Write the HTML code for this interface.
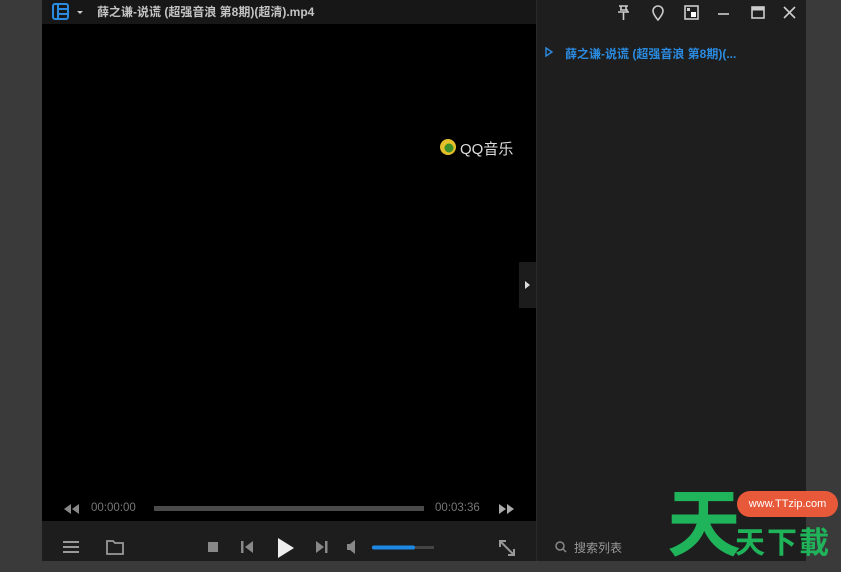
<!DOCTYPE html>
<html><head><meta charset="utf-8"><style>
*{margin:0;padding:0;box-sizing:border-box}
body{width:841px;height:561px;background:#3a3a3a;position:relative;overflow:hidden;font-family:"Liberation Sans","Noto Sans CJK SC",sans-serif}
.abs{position:absolute}
</style></head><body>
<div class="abs" style="left:42px;top:0;width:764px;height:561px;background:#1b1b1b"></div>
<div class="abs" style="left:42px;top:0;width:494px;height:24px;background:#171717"></div>
<svg class="abs" style="left:52px;top:3px" width="40" height="18">
<rect x="1" y="1" width="15" height="15" rx="2" fill="none" stroke="#2b8be0" stroke-width="2"/>
<line x1="6" y1="1" x2="6" y2="16" stroke="#2b8be0" stroke-width="2"/>
<line x1="6" y1="6" x2="16" y2="6" stroke="#2b8be0" stroke-width="2"/>
<line x1="6" y1="11" x2="16" y2="11" stroke="#2b8be0" stroke-width="2"/>
<path d="M25 8 L31 8 L28 11 Z" fill="#ccc"/>
</svg>
<div class="abs" style="left:97px;top:3px;font-size:12px;color:#c4c4c4;white-space:nowrap;font-weight:bold">薛之谦-说谎 (超强音浪 第8期)(超清).mp4</div>
<div class="abs" style="left:42px;top:24px;width:494px;height:497px;background:#000"></div>
<svg class="abs" style="left:439px;top:138px" width="20" height="20"><circle cx="9" cy="9" r="8" fill="#e5c02a"/><circle cx="10" cy="10" r="4.5" fill="#3e8f2a"/></svg>
<div class="abs" style="left:460px;top:138px;font-size:15px;color:#ddd">QQ音乐</div>
<div class="abs" style="left:519px;top:262px;width:17px;height:46px;background:#1c1c1c"></div>
<svg class="abs" style="left:524px;top:280px" width="8" height="10"><path d="M1 1 L6 5 L1 9Z" fill="#ddd"/></svg>
<svg class="abs" style="left:64px;top:504px" width="16" height="10"><path d="M7 0 L0 5 L7 10Z M15 0 L8 5 L15 10Z" fill="#888"/></svg>
<div class="abs" style="left:91px;top:502px;font-size:11.5px;color:#777">00:00:00</div>
<div class="abs" style="left:154px;top:506px;width:270px;height:5px;background:#4a4a4a"></div>
<div class="abs" style="left:435px;top:502px;font-size:11.5px;color:#777">00:03:36</div>
<svg class="abs" style="left:498px;top:504px" width="16" height="10"><path d="M1 0 L8 5 L1 10Z M9 0 L16 5 L9 10Z" fill="#aaa"/></svg>
<div class="abs" style="left:42px;top:521px;width:494px;height:40px;background:#1d1d1d"></div>
<svg class="abs" style="left:60px;top:538px" width="480" height="22">
<g stroke="#999" stroke-width="2"><line x1="3" y1="4" x2="19" y2="4"/><line x1="3" y1="9" x2="19" y2="9"/><line x1="3" y1="14" x2="19" y2="14"/></g>
<path d="M47 3 H53 L55 5 H63 V16 H47Z" fill="none" stroke="#999" stroke-width="1.8"/>
<rect x="148" y="4" width="10" height="10" fill="#888"/>
<rect x="181" y="3" width="2.5" height="12" fill="#888"/><path d="M193 3 L185 9 L193 15Z" fill="#888"/>
<path d="M218 0 L234 10 L218 20Z" fill="#eee"/>
<path d="M256 3 L264 9 L256 15Z" fill="#888"/><rect x="265" y="3" width="2.5" height="12" fill="#888"/>
<path d="M287 6 H290 L295 2 V16 L290 12 H287Z" fill="#888"/>
<rect x="312" y="8" width="62" height="3" fill="#444"/><rect x="312" y="7.5" width="43" height="4" rx="2" fill="#1e88e5"/>
<g stroke="#999" stroke-width="2" fill="none"><path d="M440 3 L454 17"/><path d="M440 9 V3 H446"/><path d="M448 17 H454 V11"/></g>
</svg>
<div class="abs" style="left:536px;top:0;width:270px;height:561px;background:#1e1e1e;border-left:1px solid #2a2a2a"></div>
<svg class="abs" style="left:615px;top:4px" width="190" height="18">
<g stroke="#ccc" stroke-width="1.6" fill="none">
<path d="M6 2 V6 M11 2 V6 M4 2 H13 M3 8 H14 M8.5 8 V16 M5 6 H12 V8"/>
<path d="M43 16 C38 10 38 8 38 7 A5 5 0 0 1 48 7 C48 8 48 10 43 16Z"/>
<rect x="70" y="2" width="13" height="13"/>
<line x1="103" y1="10" x2="114" y2="10"/>
<rect x="137" y="3" width="12" height="11"/><line x1="137" y1="5" x2="149" y2="5" stroke-width="3"/>
<path d="M169 3 L180 14 M180 3 L169 14"/>
</g><rect x="76" y="8" width="5" height="5" fill="#fff"/><rect x="72" y="4" width="3" height="3" fill="#ccc"/>
</svg>
<svg class="abs" style="left:545px;top:47px" width="9" height="10"><path d="M1 1 L7 5 L1 9Z" fill="none" stroke="#2b8be0" stroke-width="1.4"/></svg>
<div class="abs" style="left:565px;top:45px;font-size:12px;color:#2b8be0;white-space:nowrap;font-weight:bold">薛之谦-说谎 (超强音浪 第8期)(...</div>
<svg class="abs" style="left:554px;top:540px" width="14" height="14"><circle cx="6" cy="6" r="4" fill="none" stroke="#888" stroke-width="1.5"/><line x1="9" y1="9" x2="12" y2="12" stroke="#888" stroke-width="1.5"/></svg>
<div class="abs" style="left:574px;top:539px;font-size:12px;color:#999">搜索列表</div>
<div class="abs" style="left:667px;top:482px;font-size:74px;line-height:74px;color:#1fb35a;font-weight:bold;font-family:'Noto Sans CJK SC',sans-serif">天</div>
<div class="abs" style="left:737px;top:491px;width:101px;height:26px;border-radius:13px;background:#e8593a;color:#fff;font-size:11px;line-height:26px;text-align:center">www.TTzip.com</div>
<div class="abs" style="left:735px;top:522px;font-size:30px;line-height:36px;color:#1fb35a;font-weight:bold;font-family:'Noto Sans CJK SC',sans-serif;letter-spacing:2px">天下載</div>
</body></html>
